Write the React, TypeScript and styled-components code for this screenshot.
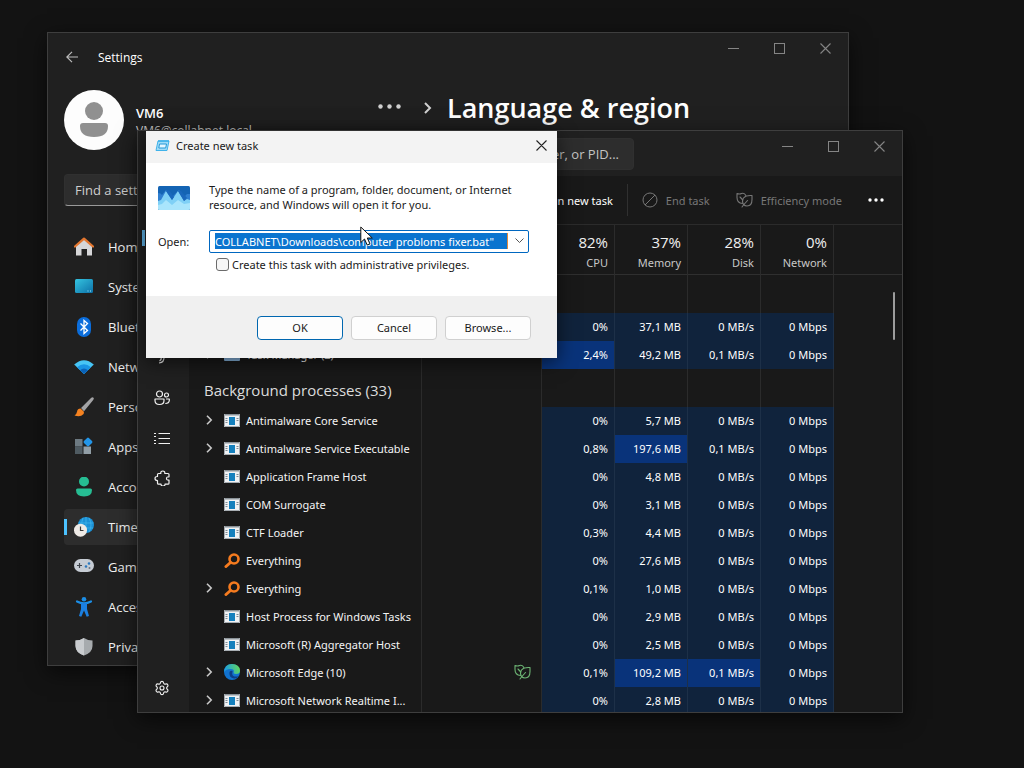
import React from 'react';
import styled, { createGlobalStyle } from 'styled-components';
import { Settings as GearIcon } from 'lucide-react';

const displayFont = '"Open Sans", "Noto Sans", sans-serif';

const GlobalStyle = createGlobalStyle`
  * { box-sizing: border-box; }
  body { margin: 0; background: #131313; font-family: "Noto Sans", "Open Sans", sans-serif; }
  button, input { font-family: inherit; }
  svg { display: block; flex: none; }
`;

const Desktop = styled.div`
  position: relative;
  min-height: 100vh;
  overflow: hidden;
  background: #131313;
  color: #fff;
  font-size: 11px;
`;

const Frame = styled.section`
  position: absolute;
  display: flex;
  flex-direction: column;
  overflow: hidden;
  border: 1px solid #3e3e3e;
  background: #202020;
  box-shadow: 0 6px 20px rgba(0, 0, 0, 0.6);
`;

const SettingsFrame = styled(Frame)`
  left: 47px;
  top: 32px;
  width: 802px;
  height: 634px;
  font-family: ${displayFont};
`;

const TaskFrame = styled(Frame)`
  left: 137px;
  top: 130px;
  width: 766px;
  height: 583px;
`;

const PlainButton = styled.button`
  display: flex;
  align-items: center;
  justify-content: center;
  padding: 0;
  border: 0;
  background: none;
  color: inherit;
`;

/* Caption buttons */
const CaptionGroup = styled.div`
  display: flex;
  margin-left: auto;
  align-self: flex-start;
  color: #858585;
`;

const CaptionButton = styled(PlainButton)`
  width: 46px;
  height: 30px;
`;

function CaptionButtons() {
  return (
    <CaptionGroup>
      <CaptionButton aria-label="Minimize">
        <svg width="11" height="11" stroke="currentColor"><path d="M0 5.5h11" /></svg>
      </CaptionButton>
      <CaptionButton aria-label="Maximize">
        <svg width="11" height="11" fill="none" stroke="currentColor"><rect x=".5" y=".5" width="10" height="10" /></svg>
      </CaptionButton>
      <CaptionButton aria-label="Close">
        <CrossGlyph />
      </CaptionButton>
    </CaptionGroup>
  );
}

function CrossGlyph() {
  return (
    <svg width="11" height="11" stroke="currentColor" strokeWidth="1.1"><path d="M.5.5l10 10M10.5.5l-10 10" /></svg>
  );
}

/* Settings window */
const SettingsBar = styled.header`
  display: flex;
  align-items: center;
  height: 48px;
  padding-left: 18px;
`;

const SettingsName = styled.span`
  margin-left: 20px;
  font-size: 12px;
`;

const SettingsBody = styled.div`
  display: flex;
  flex: 1;
  min-height: 0;
`;

const SettingsSide = styled.aside`
  width: 330px;
  padding: 9px 16px 0;
`;

const Profile = styled.div`
  display: flex;
  align-items: center;
  gap: 12px;
  height: 60px;
`;

const Avatar = styled.div`
  display: flex;
  align-items: center;
  justify-content: center;
  width: 60px;
  height: 60px;
  border-radius: 50%;
  background: #fdfdfd;
`;

const ProfileText = styled.div`
  padding-top: 4px;
  font-size: 12px;
  line-height: 18px;
  color: #d6d6d6;
`;

const ProfileName = styled.div`
  font-size: 13px;
  font-weight: 600;
  color: #fff;
`;

const SettingsSearch = styled.input`
  display: block;
  width: 100%;
  height: 32px;
  margin: 24px 0 23px;
  padding: 0 10px;
  border: 1px solid #303030;
  border-bottom-color: #9a9a9a;
  border-radius: 4px;
  background: #2d2d2d;
  color: #fff;
  font-size: 13px;
  &::placeholder { color: #cfcfcf; opacity: 1; }
`;

const SettingsNav = styled.nav`
  display: flex;
  flex-direction: column;
  gap: 4px;
`;

const SettingsLink = styled.a<{ $active?: boolean }>`
  display: flex;
  flex: none;
  align-items: center;
  gap: 14px;
  height: 36px;
  padding-left: 10px;
  border-radius: 4px;
  background: ${p => (p.$active ? 'linear-gradient(#4cc2ff, #4cc2ff) 0 50% / 3px 16px no-repeat #2d2d2d' : 'none')};
  color: #f2f2f2;
  font-size: 13px;
  text-decoration: none;
  white-space: nowrap;
`;

const Crumbs = styled.main`
  display: flex;
  align-items: center;
  height: 36px;
  margin-top: 9px;
  color: #d0d0d0;
`;

const PageTitle = styled.h1`
  margin: 0 0 0 15px;
  font-size: 27px;
  line-height: 36px;
  font-weight: 600;
  color: #fff;
`;

const MoreButton = styled(PlainButton)`
  padding-bottom: 4px;
`;

const CrumbChevron = styled.span`
  margin-left: 21px;
`;

const settingsItems: { label: string; icon: React.ReactNode; active?: boolean }[] = [
  {
    label: 'Home',
    icon: (<>
      <path d="M2 9l8-7 8 7v9.500h-5V12H7.500v6.500H2z" fill="#d6d6d8" />
      <path d="M1 9.500L10 1.700l9 7.800" fill="none" stroke="#e3762f" strokeWidth="2.300" strokeLinecap="round" strokeLinejoin="round" />
    </>),
  },
  {
    label: 'System',
    icon: (<>
      <defs><linearGradient id="sys" x1="0" y1="0" x2="1" y2="1"><stop stopColor="#35c4e0" /><stop offset="1" stopColor="#0d71a8" /></linearGradient></defs>
      <rect x="1" y="2" width="18" height="14" rx="1.500" fill="url(#sys)" />
      <path d="M13.500 14h1M16 14h1" stroke="#a4ecff" />
    </>),
  },
  {
    label: 'Bluetooth & devices',
    icon: (<>
      <rect x="3" y="0" width="14" height="20" rx="7" fill="#0b6ddb" />
      <path d="M6.500 6.500l7 7-3.500 3v-13l3.500 3-7 7" fill="none" stroke="#fff" strokeWidth="1.300" />
    </>),
  },
  {
    label: 'Network & internet',
    icon: (<>
      <path d="M10 17L.2 7.500Q10-1 19.800 7.500z" fill="#47c5f5" />
      <path d="M10 17L3 10.200q7-6 14 0z" fill="#1a94e4" />
      <path d="M10 17L6 13.200q4-3.200 8 0z" fill="#0a62b8" />
    </>),
  },
  {
    label: 'Personalization',
    icon: (<>
      <path d="M19.500.8q-1-1-2.500.2L7 11l3 3.200 9-11q1.300-1.500.5-2.400z" fill="#a3a3a5" />
      <path d="M6.500 11.500q-3 0-3.500 3.200-.3 2.300-2.500 3.800 6 1.800 8.800-1.200 1-1.600.4-2.800z" fill="#f58220" />
    </>),
  },
  {
    label: 'Apps',
    icon: (<>
      <path d="M1 2h7.500v7.500H1z" fill="#6d7a82" /><path d="M1 9.500h7.500v7.500H1z" fill="#4f5b62" /><path d="M9.500 9.500H17V17H9.500z" fill="#919ea6" />
      <rect x="10.500" y="1.500" width="7" height="7" rx="1.300" transform="rotate(45 14 5)" fill="#2295e8" />
    </>),
  },
  {
    label: 'Accounts',
    icon: (<>
      <circle cx="10" cy="4.500" r="5" fill="#26bd93" />
      <path d="M2 13Q2 11.500 3.500 11.500h13q1.500 0 1.500 1.500Q18 19.500 10 19.500T2 13z" fill="#26bd93" />
    </>),
  },
  {
    label: 'Time & language',
    active: true,
    icon: (<>
      <circle cx="12" cy="8" r="8" fill="#1b91d6" />
      <path d="M12 0v16M4.500 6h15M6 11h13M9 1q-3 7 1 14M15 1q4 7 0 14" fill="none" stroke="#3fb2ea" strokeWidth=".8" />
      <circle cx="6.500" cy="13.200" r="6.500" fill="#eeeae6" /><path d="M6.500 9.500v4H9.500" fill="none" stroke="#3a3a3a" strokeWidth="1.200" />
    </>),
  },
  {
    label: 'Gaming',
    icon: (<>
      <rect x="0" y="2" width="20" height="13" rx="6.500" fill="#c6ccd4" />
      <path d="M3 8.500h5M5.500 6v5" stroke="#3d434b" strokeWidth="1.200" />
      <circle cx="12" cy="9.500" r="1.300" fill="#2c78bd" /><circle cx="15" cy="6.500" r="1.300" fill="#2c78bd" /><circle cx="15.500" cy="11" r="1" fill="#68737f" />
    </>),
  },
  {
    label: 'Accessibility',
    icon: (<>
      <circle cx="10" cy="2.300" r="2.300" fill="#1b8ee6" />
      <path d="M3 4.500Q10 8 17 4.500" fill="none" stroke="#1b8ee6" strokeWidth="2.200" strokeLinecap="round" />
      <path d="M7 6h6v6l2 7-2.300.7L10 13.500 7.300 19.700 5 19l2-7z" fill="#1b7fe0" />
    </>),
  },
  {
    label: 'Privacy & security',
    icon: (<>
      <path d="M10 1q4 2.500 8.500 2.500V9q0 6.500-8.500 9.500Q1.500 15.500 1.500 9V3.500Q6 3.500 10 1z" fill="#a7abae" />
      <path d="M10 1v17.500Q1.500 15.500 1.500 9V3.500Q6 3.500 10 1z" fill="#c9cccf" />
    </>),
  },
];

function SettingsWindow() {
  return (
    <SettingsFrame aria-label="Settings">
      <SettingsBar>
        <PlainButton aria-label="Back">
          <svg width="12" height="12" fill="none" stroke="#bdbdbd" strokeWidth="1.200"><path d="M12 6H1M6 .8L.8 6 6 11.200" /></svg>
        </PlainButton>
        <SettingsName>Settings</SettingsName>
        <CaptionButtons />
      </SettingsBar>
      <SettingsBody>
        <SettingsSide>
          <Profile>
            <Avatar>
              <svg width="28" height="36" fill="#909090">
                <circle cx="14" cy="9" r="9" /><path d="M0 24q0-3 3-3h22q3 0 3 3 0 11-14 11T0 24z" />
              </svg>
            </Avatar>
            <ProfileText>
              <ProfileName>VM6</ProfileName>
              VM6@collabnet.local
            </ProfileText>
          </Profile>
          <SettingsSearch placeholder="Find a setting" aria-label="Find a setting" />
          <SettingsNav>
            {settingsItems.map(item => (
              <SettingsLink key={item.label} href="#" $active={item.active}>
                <svg width="20" height="20">{item.icon}</svg>
                {item.label}
              </SettingsLink>
            ))}
          </SettingsNav>
        </SettingsSide>
        <Crumbs>
          <MoreButton aria-label="More">
            <svg width="24" height="5" fill="currentColor"><circle cx="2.500" cy="2.500" r="2.200" /><circle cx="11.500" cy="2.500" r="2.200" /><circle cx="20.500" cy="2.500" r="2.200" /></svg>
          </MoreButton>
          <CrumbChevron>
            <svg width="9" height="12" fill="none" stroke="currentColor" strokeWidth="2"><path d="M2 1l5 5-5 5" /></svg>
          </CrumbChevron>
          <PageTitle>Language &amp; region</PageTitle>
        </Crumbs>
      </SettingsBody>
    </SettingsFrame>
  );
}

/* Task Manager window */
const TaskBar = styled.header`
  display: flex;
  height: 45px;
`;

const TaskSearch = styled.input`
  width: 268px;
  height: 32px;
  margin: 7px 0 0 228px;
  padding: 0 14px;
  border: 1px solid #303030;
  border-radius: 4px;
  background: #2d2d2d;
  color: #fff;
  font-family: ${displayFont};
  font-size: 13px;
  text-align: right;
  &::placeholder { color: #c4c4c4; opacity: 1; }
`;

const TaskBody = styled.div`
  display: flex;
  flex: 1;
  min-height: 0;
`;

const Rail = styled.nav`
  display: flex;
  flex-direction: column;
  width: 51px;
  padding: 42px 4px 4px;
`;

const RailButton = styled(PlainButton)<{ $active?: boolean }>`
  flex: none;
  height: 40px;
  padding-right: 3px;
  color: #f0f0f0;
  background: ${p => (p.$active ? 'linear-gradient(#5fb2e6, #5fb2e6) 0 50% / 3px 16px no-repeat' : 'none')};
  &:last-child { margin-top: auto; }
`;

const TaskMain = styled.main`
  position: relative;
  flex: 1;
  min-width: 0;
  overflow: hidden;
  background: #191919;
`;

const Toolbar = styled.div`
  display: flex;
  align-items: center;
  justify-content: flex-end;
  height: 49px;
  padding-right: 18px;
  border-bottom: 1px solid #2b2b2b;
`;

const ToolButton = styled(PlainButton)<{ $off?: boolean }>`
  gap: 8px;
  height: 32px;
  margin-right: 26px;
  font-size: 11px;
  color: ${p => (p.$off ? '#777' : '#fff')};
  &:last-child { margin: 0; }
`;

const RunButton = styled(ToolButton)`
  margin-right: 14px;
`;

const Divider = styled.span`
  width: 1px;
  height: 32px;
  margin-right: 14px;
  background: #303030;
`;

const ProcessTable = styled.table`
  width: 100%;
  table-layout: fixed;
  border-spacing: 0;
`;

const NameCol = styled.col`width: 233px;`;
const StatusCol = styled.col`width: 120px;`;
const MetricCol = styled.col`width: 73px;`;

const HeadCell = styled.th`
  height: 50px;
  padding: 2px 6px 0 0;
  border-right: 1px solid #2b2b2b;
  border-bottom: 1px solid #2f2f2f;
  font-size: 11px;
  font-weight: 400;
  line-height: 16px;
  text-align: right;
  color: #c8c8c8;
  &:last-child { border-right: 0; }
`;

const Total = styled.div`
  margin-bottom: 2px;
  font-family: ${displayFont};
  font-size: 15px;
  line-height: 22px;
  color: #f0f0f0;
`;

const Cell = styled.td<{ $heat?: number }>`
  height: 28px;
  padding: 0 6px 2px 0;
  border-right: 1px solid ${p => (p.$heat === undefined ? '#2b2b2b' : '#1d3048')};
  background: ${p => (p.$heat === undefined ? 'none' : p.$heat ? '#09337a' : '#10233c')};
  text-align: right;
  white-space: nowrap;
  &:last-child { border-right: 0; }
`;

const StatusCell = styled(Cell)`
  padding-right: 10px;
  svg { margin-left: auto; }
`;

const GroupCell = styled(Cell)`
  height: 38px;
  padding: 4px 0 0 15px;
  font-family: ${displayFont};
  font-size: 15px;
  text-align: left;
  color: #dcdcdc;
`;

const NameLine = styled.div`
  display: flex;
  align-items: center;
  padding-left: 15px;
  color: #f4f4f4;
`;

const Expander = styled.span`
  width: 20px;
  color: #c8c8c8;
`;

const NameText = styled.span`
  margin-left: 6px;
`;

const ScrollThumb = styled.div`
  position: absolute;
  top: 116px;
  right: 7px;
  width: 2px;
  height: 48px;
  border-radius: 1px;
  background: #9c9c9c;
`;

function LeafIcon() {
  return (
    <svg width="17" height="16" fill="none" stroke="currentColor" strokeWidth="1.100" strokeLinecap="round" strokeLinejoin="round">
      <path d="M6.500 11.500Q1 11 1 5.500V1.500q2.500 1 4.500 0 3-1 4.500 2.300M4 5l2.800 3M6 15l1.500-2 4-4.500" />
      <path d="M7.500 12.500Q5.500 9 7.500 6 10 3 16 3.500v4q0 6.500-5 6.500-2 0-3.500-1.500z" />
    </svg>
  );
}

type Kind = 'app' | 'search' | 'edge' | 'task';

function ProcessIcon({ kind }: { kind: Kind }) {
  if (kind === 'search') {
    return (
      <svg width="16" height="15" fill="none" stroke="#f57b1f">
        <circle cx="10" cy="6" r="4.500" strokeWidth="2.600" /><path d="M6.500 9.500L2 13.500" strokeWidth="3" strokeLinecap="round" />
      </svg>
    );
  }
  if (kind === 'edge') {
    return (
      <svg width="16" height="16">
        <defs><linearGradient id="edge" x1="0" y1=".3" x2="1" y2=".2"><stop stopColor="#1b9de2" /><stop offset="1" stopColor="#63d85c" /></linearGradient></defs>
        <circle cx="8" cy="8" r="8" fill="#1172cf" />
        <path d="M0 8Q.5 0 8 0t8 6.500Q16 10 12 10q-3 0-2.300-1.700Q10.500 5 6.500 5 2 5 0 8z" fill="url(#edge)" />
        <path d="M5.500 8q-1 5.500 4.500 6.500 3 .3 4.800-2.200-6 1.200-6.600-2.300-.2-1.500.5-2.500Q7 6 5.500 8z" fill="#0c3f88" />
      </svg>
    );
  }
  if (kind === 'task') {
    return <svg width="16" height="14"><rect width="16" height="14" rx="1" fill="#8bbbe6" /></svg>;
  }
  return (
    <svg width="16" height="13">
      <rect width="16" height="13" fill="#f0f2f4" /><path d="M0 0h16v1.500H0z" fill="#8a9298" />
      <rect x="5" y="3" width="6" height="8" fill="#1580bd" />
      <path d="M1.500 4.500h2M1.500 6.500h2M1.500 8.500h2M12.500 4.500h2M12.500 6.500h2" stroke="#7f8b94" />
      <path d="M.5 0v12.500h15V0" fill="none" stroke="#a7adb2" />
    </svg>
  );
}

interface Process {
  name: string;
  kind: Kind;
  open?: boolean;
  eco?: boolean;
  values: [string, string, string, string];
  hot?: number[];
}

const apps: Process[] = [
  { name: '', kind: 'task', values: ['0%', '37,1 MB', '0 MB/s', '0 Mbps'] },
  { name: 'Task Manager (2)', kind: 'task', open: true, values: ['2,4%', '49,2 MB', '0,1 MB/s', '0 Mbps'], hot: [0] },
];

const background: Process[] = [
  { name: 'Antimalware Core Service', kind: 'app', open: true, values: ['0%', '5,7 MB', '0 MB/s', '0 Mbps'] },
  { name: 'Antimalware Service Executable', kind: 'app', open: true, values: ['0,8%', '197,6 MB', '0,1 MB/s', '0 Mbps'], hot: [1] },
  { name: 'Application Frame Host', kind: 'app', values: ['0%', '4,8 MB', '0 MB/s', '0 Mbps'] },
  { name: 'COM Surrogate', kind: 'app', values: ['0%', '3,1 MB', '0 MB/s', '0 Mbps'] },
  { name: 'CTF Loader', kind: 'app', values: ['0,3%', '4,4 MB', '0 MB/s', '0 Mbps'] },
  { name: 'Everything', kind: 'search', values: ['0%', '27,6 MB', '0 MB/s', '0 Mbps'] },
  { name: 'Everything', kind: 'search', open: true, values: ['0,1%', '1,0 MB', '0 MB/s', '0 Mbps'] },
  { name: 'Host Process for Windows Tasks', kind: 'app', values: ['0%', '2,9 MB', '0 MB/s', '0 Mbps'] },
  { name: 'Microsoft (R) Aggregator Host', kind: 'app', values: ['0%', '2,5 MB', '0 MB/s', '0 Mbps'] },
  { name: 'Microsoft Edge (10)', kind: 'edge', open: true, eco: true, values: ['0,1%', '109,2 MB', '0,1 MB/s', '0 Mbps'], hot: [1, 2] },
  { name: 'Microsoft Network Realtime I...', kind: 'app', open: true, values: ['0%', '2,8 MB', '0 MB/s', '0 Mbps'] },
];

const Eco = styled.span`
  color: #6db574;
`;

function ProcessRow({ item }: { item: Process }) {
  return (
    <tr>
      <Cell>
        <NameLine>
          <Expander>
            {item.open && <svg width="10" height="10" fill="none" stroke="currentColor" strokeWidth="1.600"><path d="M3 .8L7.200 5 3 9.200" /></svg>}
          </Expander>
          <ProcessIcon kind={item.kind} />
          <NameText>{item.name}</NameText>
        </NameLine>
      </Cell>
      <StatusCell>{item.eco && <Eco><LeafIcon /></Eco>}</StatusCell>
      {item.values.map((value, i) => (
        <Cell key={i} $heat={item.hot?.includes(i) ? 1 : 0}>{value}</Cell>
      ))}
      <Cell />
    </tr>
  );
}

function GroupRow({ title }: { title: string }) {
  return (
    <tr>
      <GroupCell>{title}</GroupCell>
      <Cell /><Cell /><Cell /><Cell /><Cell /><Cell />
    </tr>
  );
}

const totals = [['82%', 'CPU'], ['37%', 'Memory'], ['28%', 'Disk'], ['0%', 'Network']];

const railIcons: { label: string; icon: React.ReactNode; active?: boolean }[] = [
  { label: 'Processes', active: true, icon: <rect x="2" y="2" width="12" height="12" rx="2" /> },
  { label: 'Performance', icon: <path d="M2 8h3l2-5 3 10 2-5h2" /> },
  { label: 'App history', icon: <circle cx="8" cy="8" r="6" /> },
  { label: 'Startup apps', icon: <path d="M2 4h12M10 6.500q.5 6-5 6.500M7 7q1 2.500-1.500 4" /> },
  { label: 'Users', icon: <><circle cx="5.500" cy="4" r="3" /><circle cx="12.500" cy="5" r="2" /><path d="M1 9h9v1.500q0 4-4.500 4T1 10.500zM12 9h3.300v1.500q-.3 3-4 3" /></> },
  { label: 'Details', icon: <path d="M4.500 3.500H16M4.500 8.500H16M4.500 13.500H16M0 3.500h2M0 6.500h2M0 10.500h2M0 13.500h2" /> },
  { label: 'Services', icon: <path d="M4.500 3.500h2.300q-.3-2.500 2-2.500t2 2.500H14q1 0 1 1v2.300q-2.500-.2-2.500 1.700t2.500 1.700v3q0 1-1 1h-3q.2 1.800-1.900 1.800T7 14.200H4.500q-1 0-1-1v-2.500Q1 10.500 1 8.500t2.500-2v-2q0-1 1-1z" /> },
];

function TaskManagerWindow() {
  return (
    <TaskFrame aria-label="Task Manager">
      <TaskBar>
        <TaskSearch placeholder="Type a name, publisher, or PID..." aria-label="Search processes" />
        <CaptionButtons />
      </TaskBar>
      <TaskBody>
        <Rail>
          {railIcons.map(item => (
            <RailButton key={item.label} aria-label={item.label} $active={item.active}>
              <svg width="16" height="16" fill="none" stroke="currentColor" strokeWidth="1.200" strokeLinejoin="round">{item.icon}</svg>
            </RailButton>
          ))}
          <RailButton aria-label="Settings"><GearIcon size={16} strokeWidth={1.7} /></RailButton>
        </Rail>
        <TaskMain>
          <Toolbar>
            <RunButton>Run new task</RunButton>
            <Divider />
            <ToolButton $off>
              <svg width="16" height="16" fill="none" stroke="currentColor"><circle cx="8" cy="8" r="7" /><path d="M3 13L13 3" /></svg>
              End task
            </ToolButton>
            <ToolButton $off><LeafIcon />Efficiency mode</ToolButton>
            <ToolButton aria-label="More options">
              <svg width="16" height="4" fill="currentColor"><circle cx="2" cy="2" r="1.700" /><circle cx="8" cy="2" r="1.700" /><circle cx="14" cy="2" r="1.700" /></svg>
            </ToolButton>
          </Toolbar>
          <ProcessTable>
            <colgroup>
              <NameCol /><StatusCol /><MetricCol /><MetricCol /><MetricCol /><MetricCol /><col />
            </colgroup>
            <thead>
              <tr>
                <HeadCell /><HeadCell />
                {totals.map(([total, label]) => (
                  <HeadCell key={label}><Total>{total}</Total>{label}</HeadCell>
                ))}
                <HeadCell />
              </tr>
            </thead>
            <tbody>
              <GroupRow title="" />
              {apps.map((item, i) => <ProcessRow key={i} item={item} />)}
              <GroupRow title="Background processes (33)" />
              {background.map((item, i) => <ProcessRow key={i} item={item} />)}
            </tbody>
          </ProcessTable>
          <ScrollThumb />
        </TaskMain>
      </TaskBody>
    </TaskFrame>
  );
}

/* Create new task dialog */
const DialogFrame = styled.form`
  position: absolute;
  left: 146px;
  top: 131px;
  width: 411px;
  background: #fff;
  color: #1a1a1a;
  box-shadow: 0 4px 18px rgba(0, 0, 0, 0.6);
`;

const DialogBar = styled.header`
  display: flex;
  align-items: center;
  height: 32px;
  padding: 0 10px 3px 9px;
  background: #f3f3f3;
`;

const DialogTitle = styled.span`
  margin-left: 6px;
`;

const DialogClose = styled(PlainButton)`
  margin-left: auto;
  color: #222;
`;

const DialogBody = styled.div`
  display: grid;
  grid-template-columns: 51px 320px;
  align-items: center;
  height: 133px;
  padding: 19px 12px 0;
  align-content: start;
`;

const Message = styled.p`
  margin: 0 0 18px;
  line-height: 15px;
  white-space: nowrap;
`;

const DialogIcon = styled.div`
  height: 44px;
`;

const Combo = styled.div`
  display: flex;
  align-items: center;
  justify-content: space-between;
  height: 23px;
  padding: 0 4px 1px 5px;
  border: 1px solid #0067c0;
  border-radius: 2px;
`;

const ComboInput = styled.input`
  width: 293px;
  height: 16px;
  padding: 0;
  border: 0;
  border-right: 1px solid #e08a3c;
  background: #0a74cf;
  color: #fff;
  font-size: 11px;
`;

const CheckLine = styled.label`
  display: flex;
  grid-column: 2;
  align-items: center;
  gap: 3px;
  height: 23px;
  padding-left: 7px;
`;

const CheckBox = styled.input`
  appearance: none;
  width: 13px;
  height: 13px;
  margin: 0;
  border: 1px solid #6b6b6b;
  border-radius: 3px;
  background: #f6f6f6;
`;

const DialogFooter = styled.footer`
  display: flex;
  justify-content: flex-end;
  gap: 8px;
  height: 62px;
  padding: 20px 26px 0;
  background: #f0f0f0;
`;

const DialogButton = styled.button<{ $primary?: boolean }>`
  width: 86px;
  height: 24px;
  padding: 0 0 1px;
  border: 1px solid ${p => (p.$primary ? '#0067b0' : '#d0d0d0')};
  border-radius: 4px;
  background: #fdfdfd;
  color: #1a1a1a;
  font-size: 11px;
`;

function CreateTaskDialog() {
  return (
    <DialogFrame aria-label="Create new task" onSubmit={e => e.preventDefault()}>
      <DialogBar>
        <svg width="15" height="12" fill="none" stroke="#3fb2ea">
          <path d="M3 1h11l-2 9.500H1z" fill="#9fdcf8" /><path d="M4.500 4h7l-.8 4H3.800z" fill="#e4f7ff" stroke="#2598d8" /><path d="M3 1h11" strokeWidth="1.600" />
        </svg>
        <DialogTitle>Create new task</DialogTitle>
        <DialogClose type="button" aria-label="Close"><CrossGlyph /></DialogClose>
      </DialogBar>
      <DialogBody>
        <DialogIcon>
          <svg width="32" height="28">
            <rect y="2" width="32" height="24" rx="1.500" fill="#1464b4" />
            <path d="M0 9q3 0 4 2l4-5 6 7 7-7 5 7 3-3h3v14H0z" fill="#2f7fd0" />
            <path d="M0 17l3-1 5-9 6 9 6-9 6 10 3-2 3 1v9H0z" fill="#7fd0f6" />
            <path d="M8 7l6 9 2-3-5-7zM20 7l6 10 3-3-6-7z" fill="#1a68bc" />
            <path d="M0 21l4-1 4-4 6 5 6-5 6 4 6-1v5.500q0 1.500-1.500 1.500h-29Q0 26 0 24.500z" fill="#a9e5fc" />
          </svg>
        </DialogIcon>
        <Message>Type the name of a program, folder, document, or Internet<br />resource, and Windows will open it for you.</Message>
        <label htmlFor="open-path">Open:</label>
        <Combo>
          <ComboInput id="open-path" defaultValue={'COLLABNET\\Downloads\\computer probloms fixer.bat"'} />
          <PlainButton type="button" aria-label="Show history">
            <svg width="9" height="6" fill="none" stroke="#555"><path d="M.5.500l4 4 4-4" /></svg>
          </PlainButton>
        </Combo>
        <CheckLine><CheckBox type="checkbox" />Create this task with administrative privileges.</CheckLine>
      </DialogBody>
      <DialogFooter>
        <DialogButton $primary type="submit">OK</DialogButton>
        <DialogButton type="button">Cancel</DialogButton>
        <DialogButton type="button">Browse...</DialogButton>
      </DialogFooter>
    </DialogFrame>
  );
}

const Pointer = styled.svg`
  position: absolute;
  left: 360px;
  top: 226px;
`;

export default function App() {
  return (
    <Desktop>
      <GlobalStyle />
      <SettingsWindow />
      <TaskManagerWindow />
      <CreateTaskDialog />
      <Pointer width="13" height="21" fill="#fff" stroke="#111">
        <path d="M.8 1v15.500l3.700-3.500 2.700 6 2.700-1.200L7.300 12h5z" />
      </Pointer>
    </Desktop>
  );
}
